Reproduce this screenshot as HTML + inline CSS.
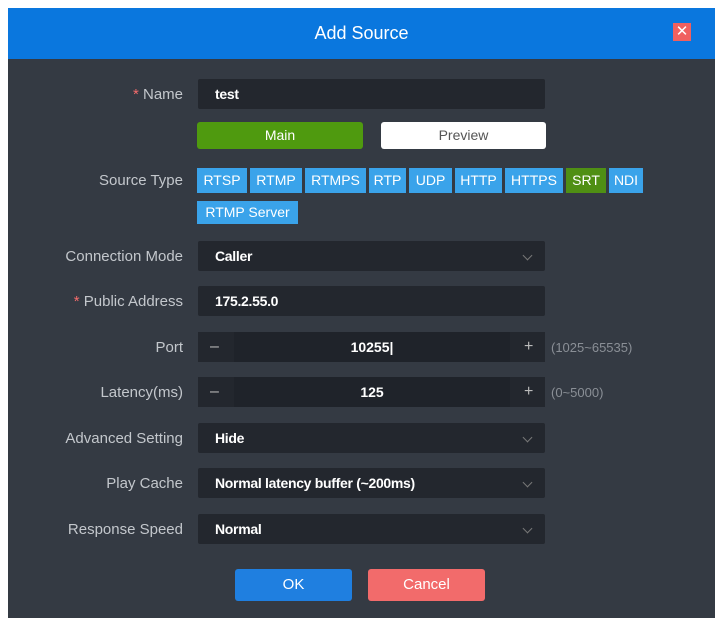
<!DOCTYPE html>
<html><head><meta charset="utf-8"><style>
*{margin:0;padding:0;box-sizing:border-box}
body{width:722px;height:627px;background:#fff;position:relative;font-family:"Liberation Sans",sans-serif;overflow:hidden}
.hd{position:absolute;left:8px;top:8px;width:707px;height:51px;background:#0a77de;color:#fff;font-size:18px;text-align:center;line-height:50px}
.x{position:absolute;left:673px;top:23px;width:18px;height:18px;background:#f0605f;color:#fff;font-size:15px;line-height:18px;text-align:center}
.bd{position:absolute;left:8px;top:59px;width:707px;height:559px;background:#343a43}
.lb{position:absolute;right:539px;color:#c3c7cc;font-size:15px;text-align:right;white-space:nowrap}
.lb i{color:#f56c6c;font-style:normal}
.in{position:absolute;left:198px;width:347px;height:30px;background:#23272e;border-radius:2px;color:#fff;font-size:14px;font-weight:bold;line-height:30px;padding-left:17px;letter-spacing:-0.3px}
.ch{position:absolute;right:14px;top:11px;width:7px;height:7px;border-right:1px solid #777;border-bottom:1px solid #777;transform:rotate(45deg)}
.tag{position:absolute;height:25px;background:#3aa3ea;color:#fff;font-size:14px;line-height:25px;text-align:center}
.num{position:absolute;left:198px;width:347px;height:30px;background:#23272e;color:#fff}
.num .c{position:absolute;left:36px;width:276px;top:0;height:30px;background:#1f232a;text-align:center;font-size:14px;font-weight:bold;line-height:30px}
.num .m,.num .p{position:absolute;top:0;line-height:30px;color:#bbb;font-size:16px}
.hint{position:absolute;left:551px;color:#8a8f96;font-size:13px}
.btn{position:absolute;height:32px;border-radius:3px;color:#fff;font-size:15px;text-align:center;line-height:32px}
</style></head><body>
<div class="hd">Add Source</div>
<div class="x">✕</div>
<div class="bd"></div>
<div class="lb" style="top:86px"><i>*</i> Name</div>
<div class="in" style="top:79px">test</div>
<div class="btn" style="left:197px;top:122px;width:166px;height:27px;line-height:27px;background:#4f9a0f;font-size:14px">Main</div>
<div class="btn" style="left:381px;top:122px;width:165px;height:27px;line-height:27px;background:#fff;color:#555;font-size:14px">Preview</div>
<div class="lb" style="top:172px">Source Type</div>
<div class="tag" style="left:197px;top:168px;width:50px">RTSP</div>
<div class="tag" style="left:250px;top:168px;width:52px">RTMP</div>
<div class="tag" style="left:305px;top:168px;width:61px">RTMPS</div>
<div class="tag" style="left:369px;top:168px;width:37px">RTP</div>
<div class="tag" style="left:409px;top:168px;width:43px">UDP</div>
<div class="tag" style="left:455px;top:168px;width:47px">HTTP</div>
<div class="tag" style="left:505px;top:168px;width:58px">HTTPS</div>
<div class="tag" style="left:566px;top:168px;width:40px;background:#4f8f14">SRT</div>
<div class="tag" style="left:609px;top:168px;width:34px">NDI</div>
<div class="tag" style="left:197px;top:201px;width:101px;height:23px;line-height:23px">RTMP Server</div>
<div class="lb" style="top:248px">Connection Mode</div>
<div class="in" style="top:241px">Caller<div class="ch"></div></div>
<div class="lb" style="top:293px"><i>*</i> Public Address</div>
<div class="in" style="top:286px">175.2.55.0</div>
<div class="lb" style="top:339px">Port</div>
<div class="num" style="top:332px"><span class="m" style="left:12px">–</span><div class="c">10255|</div><span class="p" style="left:326px">+</span></div>
<div class="hint" style="top:340px">(1025~65535)</div>
<div class="lb" style="top:384px">Latency(ms)</div>
<div class="num" style="top:377px"><span class="m" style="left:12px">–</span><div class="c">125</div><span class="p" style="left:326px">+</span></div>
<div class="hint" style="top:385px">(0~5000)</div>
<div class="lb" style="top:430px">Advanced Setting</div>
<div class="in" style="top:423px">Hide<div class="ch"></div></div>
<div class="lb" style="top:475px">Play Cache</div>
<div class="in" style="top:468px">Normal latency buffer (~200ms)<div class="ch"></div></div>
<div class="lb" style="top:521px">Response Speed</div>
<div class="in" style="top:514px">Normal<div class="ch"></div></div>
<div class="btn" style="left:235px;top:569px;width:117px;background:#1f7fe0">OK</div>
<div class="btn" style="left:368px;top:569px;width:117px;background:#f26b6b">Cancel</div>
</body></html>
